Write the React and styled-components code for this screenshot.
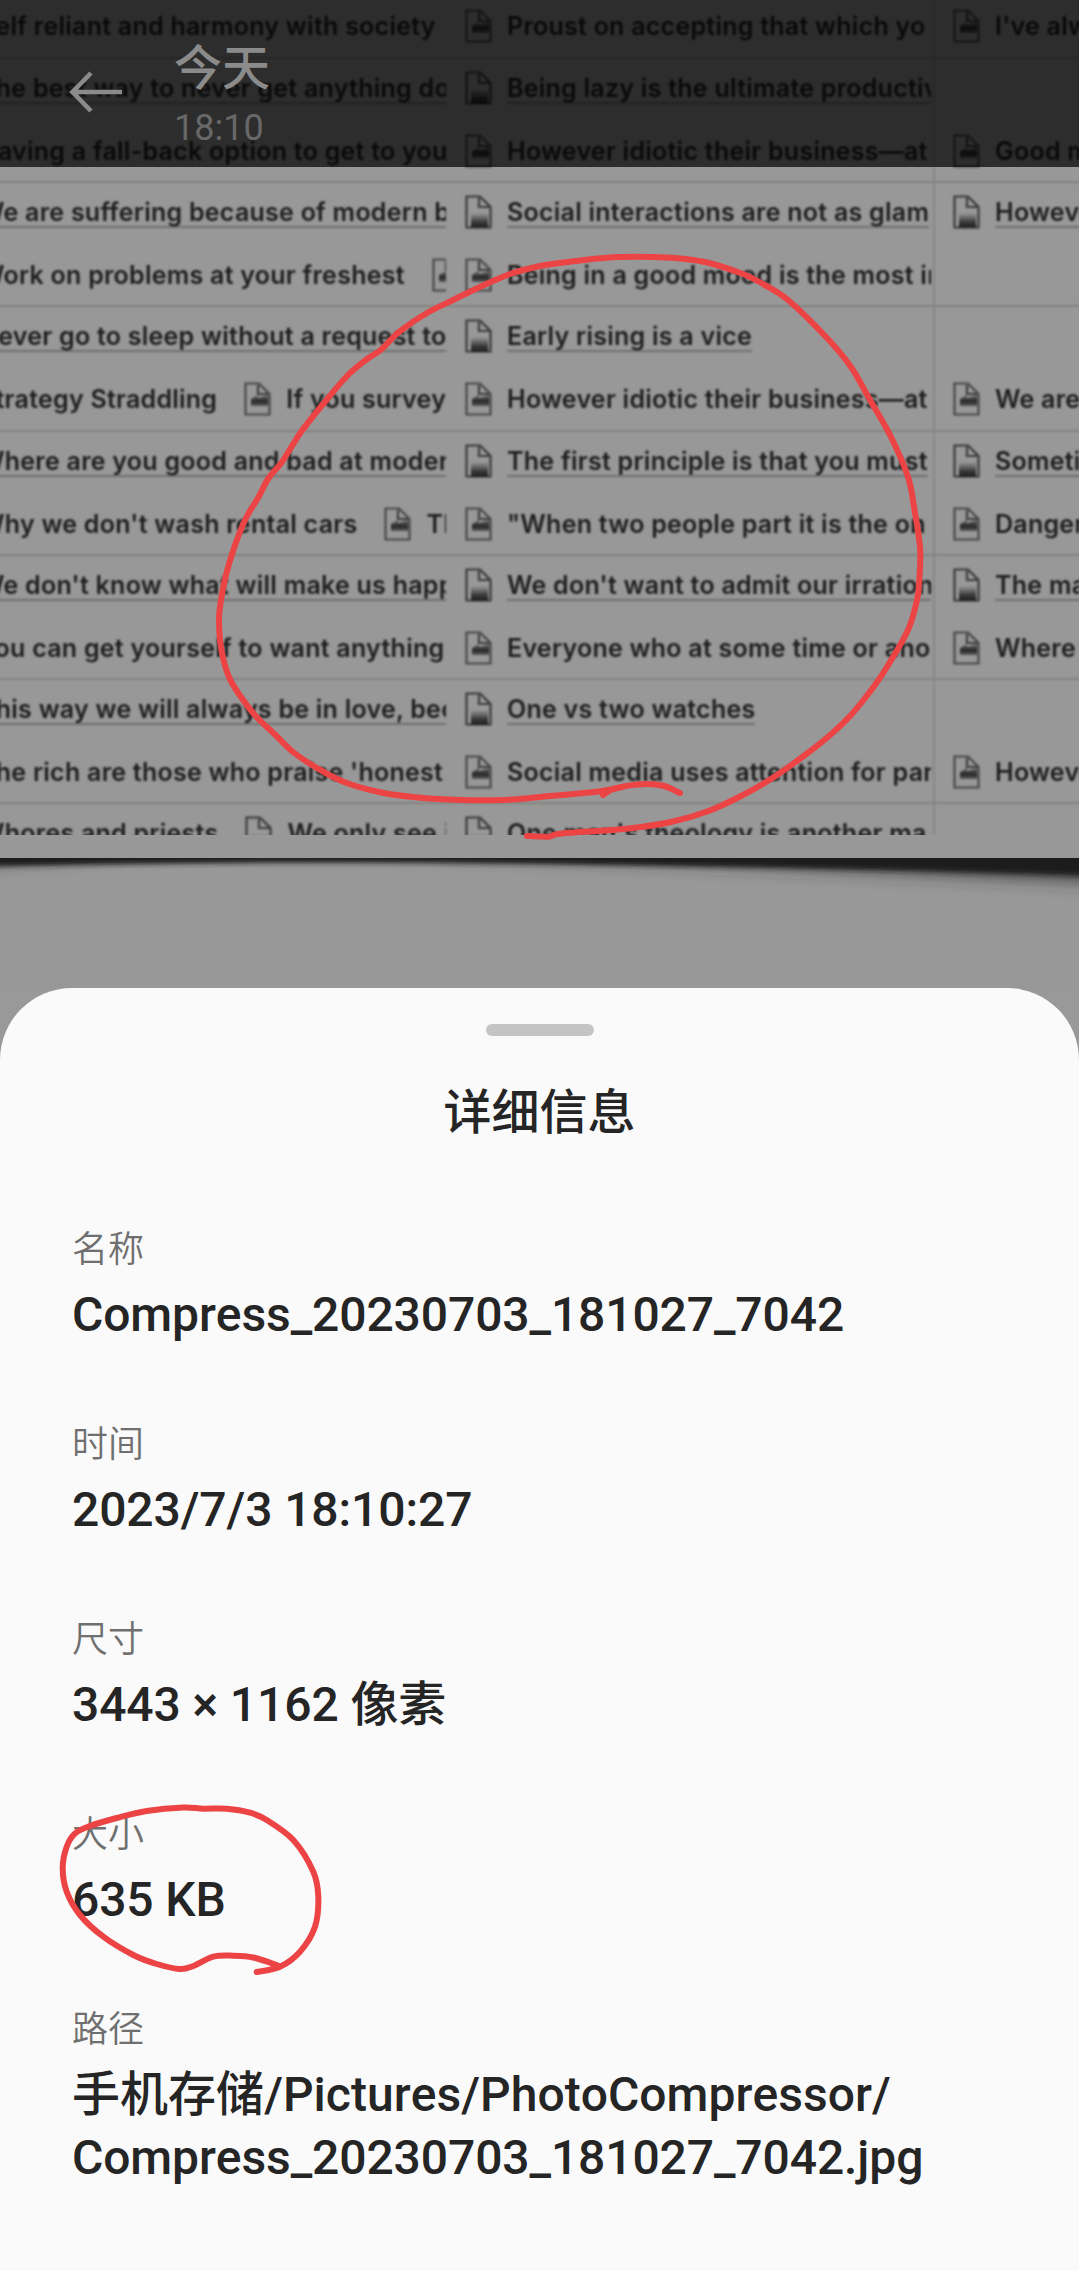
import React from "react";
import styled, { createGlobalStyle } from "styled-components";

const Global = createGlobalStyle`
  * { box-sizing: border-box; }
  body { margin: 0; background: #999; }
`;

const Page = styled.main`
  position: relative;
  width: 1079px;
  height: 2271px;
  overflow: hidden;
  display: flex;
  flex-direction: column;
  background: #999;
  font-family: Roboto, "Noto Sans CJK SC", sans-serif;
`;

const Photo = styled.section`
  height: 988px;
  flex: none;
  overflow: hidden;
  background: #989898;
`;

const TableClip = styled.div`
  height: 835px;
  overflow: hidden;
`;

const Table = styled.div`
  width: 1240px;
  margin: -67.6px 0 0 -63px;
  font-family: Inter, "Liberation Sans", sans-serif;
  font-weight: 600;
  font-size: 25px;
  letter-spacing: 0.25px;
  color: #1e1e1e;
  filter: blur(1.3px);
`;

const Row = styled.div`
  display: grid;
  grid-template-columns: 509px 489px 1fr;
  height: 124.3px;
  border-top: 2px solid #838381;
`;

const Cell = styled.div`
  min-width: 0;
  padding-left: ${(p) => p.$inset}px;
  border-right: ${(p) => (p.$ruled ? "2px solid #878785" : "0")};
`;

const Lines = styled.div`
  width: ${(p) => p.$width}px;
  height: 122px;
  padding-top: 12px;
  overflow: hidden;
  display: flex;
  flex-direction: column;
  gap: 29px;
`;

const Line = styled.div`
  display: flex;
  gap: 27px;
  height: 34px;
`;

const Entry = styled.span`
  display: flex;
  flex: none;
  gap: 14px;
  height: 34px;
  white-space: nowrap;
`;

const EntryText = styled.span`
  height: ${(p) => (p.$linked ? 33 : 34)}px;
  line-height: 35px;
  border-bottom: ${(p) => (p.$linked ? "2px solid #707070" : "0")};
`;

const CardEdge = styled.div`
  height: 22.5px;
  background: #989898;
`;

const CardShadow = styled.svg`
  display: block;
  width: 1079px;
  height: 131px;
`;

const TopBar = styled.header`
  position: absolute;
  top: 0;
  left: 0;
  width: 100%;
  height: 167px;
  padding: 37px 0 0 68px;
  display: flex;
  gap: 48px;
  background: rgba(0, 0, 0, 0.7);
`;

const BackIcon = styled.svg`
  width: 58px;
  height: 48px;
  margin-top: 31px;
`;

const Stamp = styled.div`
  display: flex;
  flex-direction: column;
`;

const Day = styled.span`
  height: 64px;
  font-size: 48px;
  line-height: 64px;
  font-weight: 500;
  color: #8b8b8b;
`;

const Clock = styled.span`
  font-size: 36px;
  line-height: 54px;
  color: #686868;
`;

const Sheet = styled.section`
  flex: 1;
  padding: 36px 72px 0;
  border-radius: 72px 72px 0 0;
  background: #fafafa;
  display: flex;
  flex-direction: column;
`;

const Handle = styled.div`
  align-self: center;
  flex: none;
  width: 108px;
  height: 12px;
  border-radius: 6px;
  background: #c4c4c4;
`;

const Title = styled.h1`
  margin: 45px 0 78px;
  font-size: 48px;
  line-height: 64px;
  font-weight: 500;
  text-align: center;
  color: #252525;
`;

const Details = styled.dl`
  margin: 0;
  display: flex;
  flex-direction: column;
  gap: 64px;
`;

const Field = styled.div`
  display: flex;
  flex-direction: column;
`;

const Label = styled.dt`
  height: 60px;
  padding-top: 1px;
  font-size: 36px;
  line-height: 52px;
  font-weight: 350;
  color: #6f6f6f;
`;

const Value = styled.dd`
  margin: 0;
  font-size: 48px;
  line-height: 63px;
  min-height: 71px;
  font-weight: 500;
  font-kerning: none;
  color: #252525;
`;

const ValueLine = styled.div`
  letter-spacing: ${(p) => (p.$folder ? 0.04 : -0.1)}px;
`;

const Markup = styled.svg`
  position: absolute;
  inset: 0;
  width: 1079px;
  height: 2271px;
  pointer-events: none;
`;

// Each row holds three cells; each cell holds a linked line and a plain line.
const rows = [
  [
    [[], ["Self reliant and harmony with society"]],
    [[], ["Proust on accepting that which yo"]],
    [[], ["I've always"]],
  ],
  [
    [["The best way to never get anything done"], ["Having a fall-back option to get to you"]],
    [["Being lazy is the ultimate productivity"], ["However idiotic their business—at"]],
    [[], ["Good morning"]],
  ],
  [
    [["We are suffering because of modern b"], ["Work on problems at your freshest", "The"]],
    [["Social interactions are not as glam"], ["Being in a good mood is the most im"]],
    [["However"], []],
  ],
  [
    [["Never go to sleep without a request to"], ["Strategy Straddling", "If you survey,"]],
    [["Early rising is a vice"], ["However idiotic their business—at"]],
    [[], ["We are all"]],
  ],
  [
    [["Where are you good and bad at moder"], ["Why we don't wash rental cars", "Th"]],
    [["The first principle is that you must"], ["\"When two people part it is the on"]],
    [["Sometimes"], ["Dangerous"]],
  ],
  [
    [["We don't know what will make us happy"], ["You can get yourself to want anything"]],
    [["We don't want to admit our irration"], ["Everyone who at some time or ano"]],
    [["The many"], ["Where do"]],
  ],
  [
    [["This way we will always be in love, bec"], ["The rich are those who praise 'honest"]],
    [["One vs two watches"], ["Social media uses attention for par"]],
    [[], ["However"]],
  ],
  [
    [["Whores and priests", "We only see i"], []],
    [["One man's theology is another ma"], []],
    [[], []],
  ],
];

const cells = [
  { width: 509, inset: 0 },
  { width: 466, inset: 19, ruled: true },
  { width: 223, inset: 18 },
];

const fields = [
  ["名称", ["Compress_20230703_181027_7042"]],
  ["时间", ["2023/7/3 18:10:27"]],
  ["尺寸", ["3443 × 1162 像素"]],
  ["大小", ["635 KB"]],
  ["路径", ["手机存储/Pictures/PhotoCompressor/", "Compress_20230703_181027_7042.jpg"]],
];

const circleTop = [
  [527, 836], [540, 836.5], [550, 836.5], [562, 833.5], [626, 828.7], [671, 822], [708.5, 811], [743, 795],
  [774, 777], [805, 755], [829, 736], [851, 715], [873.5, 687], [887, 667], [908, 630], [917, 600],
  [919.5, 577], [920, 547], [914, 507], [908, 477], [891, 437], [870, 400], [851, 367], [827, 338],
  [788, 300], [763, 284], [743, 274], [705, 262], [671, 257.7], [619, 257], [578, 260.7], [540, 266],
  [510, 274], [482, 286], [453, 300], [427, 313], [399.5, 331.7], [380.5, 350], [368.5, 358], [348, 375],
  [324, 403], [301, 432], [282, 462], [268.6, 478], [258, 498], [246, 518], [234, 548], [225.5, 577],
  [221, 600], [219, 620], [221.4, 650], [229, 677], [241, 697], [256.5, 717], [275.5, 735], [293, 752],
  [317, 768], [344, 782], [379, 792], [413, 797], [454.5, 799.7], [503, 800], [540, 797], [602, 791],
  [626, 786], [646.5, 784], [664, 786], [680, 793],
];

const tick = [[603, 795], [612, 789.5], [622, 787]];

const circleSize = [
  [256.7, 1972], [280, 1966.7], [300, 1951.7], [315, 1926.7], [318.3, 1896.7], [313.3, 1871.7],
  [293.3, 1840], [266.7, 1820], [250, 1812.7], [226.7, 1808.7], [203.3, 1808.7], [183.3, 1807.5],
  [146.7, 1811], [116.7, 1818], [90, 1826], [75, 1833.5], [66.7, 1846.7], [62.7, 1868], [66.7, 1891.7],
  [80, 1915], [103.3, 1936.7], [133.3, 1955], [156.7, 1964], [180, 1969], [193.3, 1966], [213.3, 1956.7],
  [233.3, 1955.7], [253.3, 1957.5], [278, 1965.5],
];

// Catmull-Rom spline through the pen samples, emitted as cubic segments.
function smooth(points) {
  let d = `M${points[0][0]} ${points[0][1]}`;
  for (let i = 0; i < points.length - 1; i++) {
    const a = points[Math.max(i - 1, 0)];
    const b = points[i];
    const c = points[i + 1];
    const e = points[Math.min(i + 2, points.length - 1)];
    d += `C${b[0] + (c[0] - a[0]) / 6} ${b[1] + (c[1] - a[1]) / 6} ${c[0] - (e[0] - b[0]) / 6} ${
      c[1] - (e[1] - b[1]) / 6
    } ${c[0]} ${c[1]}`;
  }
  return d;
}

const InkDefs = styled.svg`
  display: block;
  width: 0;
  height: 0;
`;

function IconInk() {
  return (
    <InkDefs>
      <defs>
        <linearGradient id="ink-low" x1="0" y1="18" x2="0" y2="33" gradientUnits="userSpaceOnUse">
          <stop offset="0" stopColor="#222" stopOpacity="0" />
          <stop offset="0.65" stopColor="#222" stopOpacity="0.85" />
          <stop offset="1" stopColor="#222" />
        </linearGradient>
        <linearGradient id="ink-mid" x1="0" y1="11" x2="0" y2="25" gradientUnits="userSpaceOnUse">
          <stop offset="0" stopColor="#222" stopOpacity="0.2" />
          <stop offset="0.6" stopColor="#222" stopOpacity="0.95" />
          <stop offset="1" stopColor="#222" stopOpacity="0.4" />
        </linearGradient>
      </defs>
    </InkDefs>
  );
}

function DocIcon({ linked }) {
  return (
    <svg width="28" height="34" viewBox="0 0 28 34" fill="none">
      <path d="M1.500 1.500H15L25.500 12V32.500H1.500Z" stroke={linked ? "#3a3a3a" : "#484848"} strokeWidth="2.200" />
      <path d="M14 3V12H24" stroke="#3c3c3c" strokeWidth="2.200" />
      {linked ? (
        <path d="M6 18H23V33H6Z" fill="url(#ink-low)" />
      ) : (
        <path d="M7 17L14 13V16L24 13V24H7Z" fill="url(#ink-mid)" />
      )}
    </svg>
  );
}

function EntryLine({ entries, linked }) {
  return (
    <Line>
      {entries.map((text) => (
        <Entry key={text}>
          <DocIcon linked={linked} />
          <EntryText $linked={linked}>{text}</EntryText>
        </Entry>
      ))}
    </Line>
  );
}

export default function App() {
  return (
    <>
      <Global />
      <Page>
        <Photo>
          <IconInk />
          <TableClip>
            <Table>
              {rows.map((row, r) => (
                <Row key={r}>
                  {row.map(([first, second], c) => (
                    <Cell key={c} $inset={cells[c].inset} $ruled={cells[c].ruled}>
                      <Lines $width={cells[c].width}>
                        <EntryLine entries={first} linked />
                        <EntryLine entries={second} />
                      </Lines>
                    </Cell>
                  ))}
                </Row>
              ))}
            </Table>
          </TableClip>
          <CardEdge />
          <CardShadow viewBox="0 0 1079 131">
            <defs>
              <filter id="soft" x="-10%" y="-100%" width="120%" height="400%">
                <feGaussianBlur stdDeviation="2.5" />
              </filter>
              <filter id="wide" x="-10%" y="-100%" width="120%" height="400%">
                <feGaussianBlur stdDeviation="9" />
              </filter>
            </defs>
            <path d="M-40 -20H1130V24Q800 8 420 -8L200 -12L-40 4Z" fill="#2c2c2c" fillOpacity="0.9" filter="url(#wide)" />
            <path d="M-40 -20H1130V19C900 11 700 8 540 6Q250 2 -40 9Z" fill="#1c1c1c" filter="url(#soft)" />
          </CardShadow>
        </Photo>
        <Sheet>
          <Handle />
          <Title>详细信息</Title>
          <Details>
            {fields.map(([label, lines]) => (
              <Field key={label}>
                <Label>{label}</Label>
                <Value>
                  {lines.map((line) => (
                    <ValueLine key={line} $folder={line.endsWith("/")}>
                      {line}
                    </ValueLine>
                  ))}
                </Value>
              </Field>
            ))}
          </Details>
        </Sheet>
        <TopBar>
          <BackIcon viewBox="0 0 58 48" fill="none" stroke="#8b8b8b" strokeWidth="4.600">
            <path d="M54 24H5M23 5L4.500 24L23 43" />
          </BackIcon>
          <Stamp>
            <Day>今天</Day>
            <Clock>18:10</Clock>
          </Stamp>
        </TopBar>
        <Markup viewBox="0 0 1079 2271" fill="none" stroke="#ec4444" strokeWidth="6" strokeLinecap="round" strokeLinejoin="round">
          <path d={smooth(circleTop)} />
          <path d={smooth(tick)} />
          <path d={smooth(circleSize)} />
        </Markup>
      </Page>
    </>
  );
}
